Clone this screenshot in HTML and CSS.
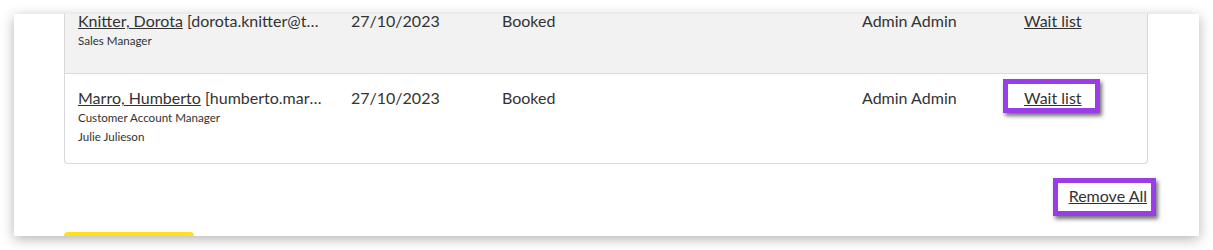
FILE: index.html
```html
<!DOCTYPE html>
<html lang="en">
<head>
    <meta charset="UTF-8">
    <title>Attendees</title>
    <link rel="stylesheet" href="styles.css">
</head>
<body>

<div class="frame">
    <div class="content">

        <!-- Attendee rows -->
        <div class="table">
            <div class="row shaded">
                <div class="cell name">
                    <div class="truncate"><a href="#">Knitter, Dorota</a> [dorota.knitter@test.example.com]</div>
                    <div class="sub">Sales Manager</div>
                </div>
                <div class="cell">27/10/2023</div>
                <div class="cell">Booked</div>
                <div class="cell">Admin Admin</div>
                <div class="cell"><a href="#">Wait list</a></div>
            </div>
            <div class="row">
                <div class="cell name">
                    <div class="truncate"><a href="#">Marro, Humberto</a> [humberto.marro@test.example.com]</div>
                    <div class="sub">Customer Account Manager</div>
                    <div class="sub">Julie Julieson</div>
                </div>
                <div class="cell">27/10/2023</div>
                <div class="cell">Booked</div>
                <div class="cell">Admin Admin</div>
                <div class="cell"><a href="#" class="hl hl-wait">Wait list</a></div>
            </div>
        </div>

        <div class="footer">
            <a href="#" class="hl hl-remove">Remove All</a>
        </div>

        <button class="btn-yellow" type="button">Save</button>
    </div>
</div>

</body>
</html>
```

FILE: styles.css
```css
* {
    margin: 0;
    padding: 0;
    box-sizing: border-box;
}
body {
    font-family: Lato, "Open Sans", sans-serif;
    background-color: #fff;
    color: #333;
    overflow: hidden;
}
a {
    color: #333;
    text-decoration: underline;
}

/* screenshot card */
.frame {
    margin: 14px;
    height: 222px;
    overflow: hidden;
    background-color: #fff;
    box-shadow: 0 3px 12px rgba(0, 0, 0, 0.3);
}
.content {
    margin-top: -17px;
    padding: 0 51px 0 50px;
}

/* table */
.table {
    border: 1px solid #d9d9d9;
    border-top: none;
    border-radius: 0 0 4px 4px;
}
.row {
    display: grid;
    grid-template-columns: 273px 151px 360px 162px 1fr;
    padding: 14px 0 0 13px;
    font-size: 16px;
    line-height: 1.2;
    height: 89px;
}
.row.shaded {
    background-color: #f2f2f2;
    border-bottom: 1px solid #dcdcdc;
    height: 77px;
}
.cell {
    min-width: 0;
}
.name {
    padding-right: 25px;
}
.truncate {
    white-space: nowrap;
    overflow: hidden;
    text-overflow: ellipsis;
}
.sub {
    font-size: 11.6px;
    line-height: 19px;
    margin-top: 1px;
}
.sub + .sub {
    margin-top: 0;
}

/* highlighted links */
.hl {
    display: inline-block;
    border: 5px solid #9a3de9;
    box-shadow: 2px 3px 4px rgba(0, 0, 0, 0.55);
    background-color: #fff;
}
.hl-wait {
    padding: 4px 13px 1px 16px;
    margin: -9px -18px -6px -21px;
}
.footer {
    display: flex;
    justify-content: flex-end;
    margin-top: 22px;
    font-size: 16px;
    line-height: 1.2;
}
.hl-remove {
    padding: 3px 4px 6px 11px;
    margin: -8px -8px -11px -16px;
}

.btn-yellow {
    display: block;
    margin-top: 27px;
    width: 130px;
    height: 40px;
    border: none;
    border-radius: 4px;
    background-color: #ffe01b;
    color: #333;
    font-family: Lato, sans-serif;
    font-size: 16px;
}
```
